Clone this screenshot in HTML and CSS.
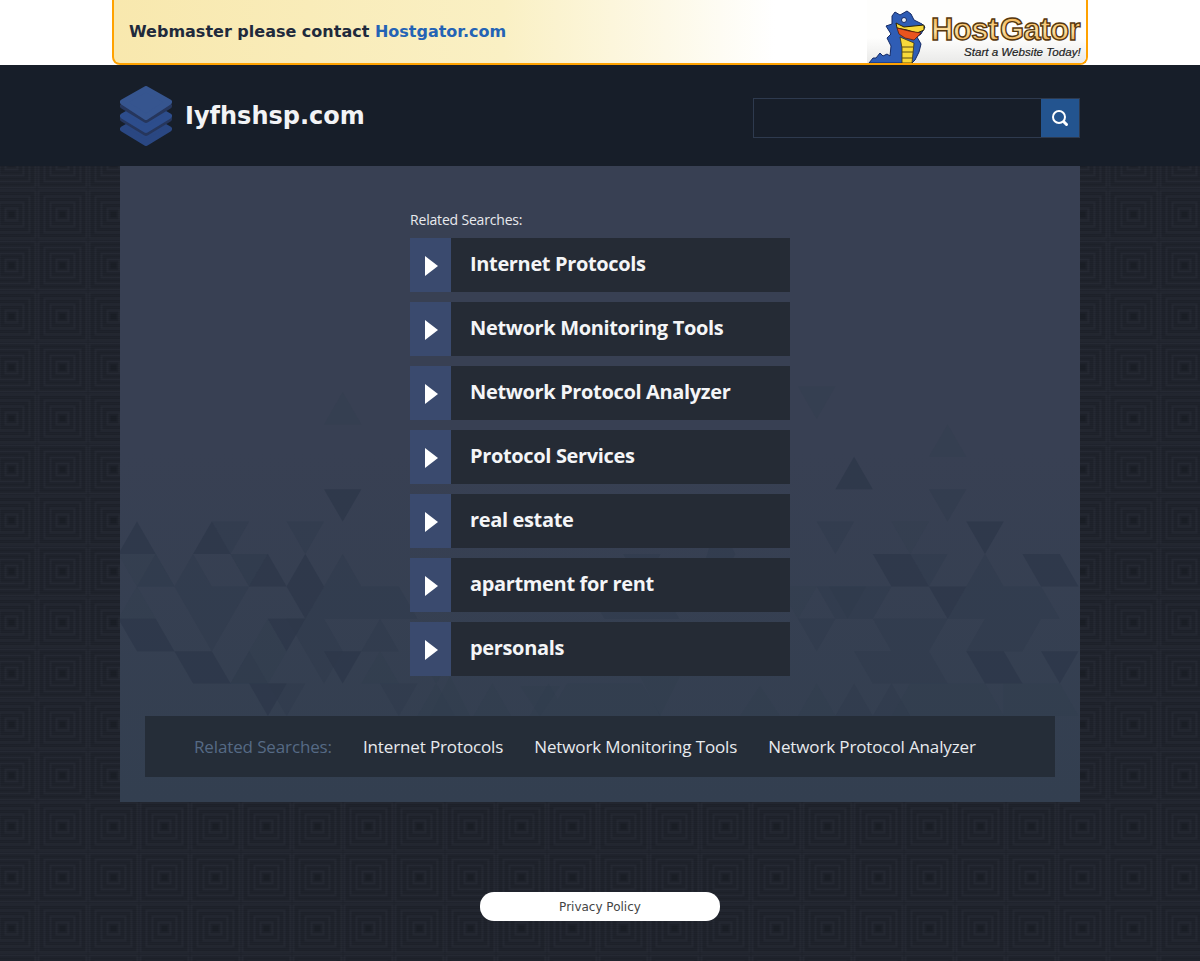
FILE: index.html
```html
<!DOCTYPE html>
<html lang="en">
<head>
    <meta charset="UTF-8" />
    <title>Iyfhshsp.com</title>
    <link rel="stylesheet" href="styles.css">
</head>
<body>
    <div class="topbar">
        <div class="notice">
            <p class="notice-text">Webmaster please contact <a href="#">Hostgator.com</a></p>
            <svg class="gator" width="219" height="63" viewBox="0 0 219 63">
                <defs>
                    <linearGradient id="gatorBg" x1="0" y1="0" x2="0" y2="1">
                        <stop offset="0.6" stop-color="#fefefd" />
                        <stop offset="1" stop-color="#e9e9e8" />
                    </linearGradient>
                    <linearGradient id="gatorText" x1="0" y1="0" x2="0" y2="1">
                        <stop offset="0" stop-color="#f2a436" />
                        <stop offset="0.55" stop-color="#fde0a0" />
                        <stop offset="1" stop-color="#e8952a" />
                    </linearGradient>
                </defs>
                <rect width="219" height="63" fill="url(#gatorBg)" />
                <path class="gator-body" d="M2 63 6 58 9 58 13 53 16 56 20 54 23 56 24 46 20 38 24 34 19 26 25 24 25 16 28 12 33 15 40 11 44 14 47 20 55 24 58 27 54 34 50 37 54 44 52 52 48 60 45 63Z" />
                <path class="gator-belly" d="M33 37 47 43 45 63 35 63 35 48Z" />
                <path class="gator-scale" d="M35 47H46M35 52H46M35 58H45" />
                <path class="gator-jaw" d="M29 23 37 27 57 25 57 30 50 33 40 30 30 28Z" />
                <path class="gator-mouth" d="M30 28 42 31 54 33 47 40 38 38 32 34Z" />
                <circle class="gator-eye" cx="37" cy="20" r="2.5" />
                <text class="gator-name" x="64" y="40">Host Gator</text>
                <text class="gator-slogan" x="97" y="56">Start a Website Today!</text>
            </svg>
        </div>
    </div>

    <header class="site-header">
        <div class="header-inner">
            <a class="brand" href="#">
                <svg class="brand-icon" width="52" height="60" viewBox="0 0 52 60">
                    <path class="stack-low" d="M3 43 26 30 49 43 26 57Z" />
                    <path class="stack-shadow" d="M3 33 26 20 49 33 26 47Z" />
                    <path class="stack-mid" d="M3 30 26 17 49 30 26 44Z" />
                    <path class="stack-shadow" d="M3 20 26 7 49 20 26 34Z" />
                    <path class="stack-top" d="M3 16 26 3 49 16 26 31Z" />
                </svg>
                <span class="brand-name">Iyfhshsp.com</span>
            </a>
            <form class="search">
                <input class="search-input" type="text" />
                <button class="search-btn" type="button" aria-label="Search">
                    <svg width="18" height="18" viewBox="0 0 18 18">
                        <circle cx="8" cy="8" r="6" fill="none" stroke="#fff" stroke-width="2" />
                        <path d="M13 13 15.5 15.5" stroke="#fff" stroke-width="3" stroke-linecap="round" />
                    </svg>
                </button>
            </form>
        </div>
    </header>

    <main class="content">
        <svg class="triangles" width="960" height="636" viewBox="0 0 960 636" aria-hidden="true">
            <g transform="translate(17 355.6) scale(18.7 32.4)">
                <path class="tri-faint" d="M11-4l1 1h-2zM0 2l1 1h-2zM5 1l2 0-1 1zM-1 1h2l1 1h-2zM6 4l1 1h-2zM7 3l1 1-1 1-1-1zM13 4l1 1h-2zM15 4h2l-1 1zM19 5l1 1h-2zM23 5h4l1 1h-6zM21 6l1-1 1 1zM16 5l1 1h-2z" />
                <path class="tri-mid" d="M4 0h2l-1 1zM8 0h2l-1 1zM1 1l1 1h-2zM3 1l1 1h-2zM5 1h2l-1 1zM11 1l1 1h-2zM14 2l1 1h-2zM2 2h4l-1 1h-2zM10 2h4l1 1h-6zM3 3h2l-1 1zM8 3h2l1 1-1 1-1-1zM13 3l1 1h-2zM6 4l1 1h-2zM7 5h2l-1 1zM13 5h2l-1 1zM26 1h2l-1 1zM31 0l1 1-1 1h-1zM24 2h4l1 1h-4zM37 2h2l-1 1z" />
                <path class="tri-dark" d="M10-1h2l-1 1zM0 0l1 1h-2zM4 0l1 1h-2zM7 1l1 1h-2zM9 1l1 1h-2zM-1 3h2l1 1h-2zM7 3h2l-1 1zM2 4h2l1 1h-2zM10 4h2l-1 1zM6 5h2l-1 1zM8 2h2l-1 1-1-1z" />
            </g>
            <g transform="translate(696.7 355.6) scale(18.7 32.4)">
                <path class="tri-faint" d="M-1-4.17h2l-1 1zM7-3l1 1h-2zM4 0h2l-1 1zM-2 2h2l-1 1zM0 5l1 1h-2zM5 5h4l1 1h-6zM10 5h3l1 1h-4z" />
                <path class="tri-mid" d="M6-1h2l-1 1zM0 0h2l-1 1zM5 1h2l-1 1zM9 1l1 1h-2zM0 2h4l-1 1h-2zM8 2h4l1 1h-6zM-1 3h2l-1 1zM3 3h4l-1 1h-2zM2 4h4l1 1h-4zM9 3h3l-1 1h-3zM2 5l1 1h-2zM4 5l1 1h-2z" />
                <path class="tri-dark" d="M2-2l1 1h-2zM8 0h2l-1 1zM3 1h2l1 1h-2zM11 1h2l1 1h-2zM6 2h2l-1 1zM8 4h2l1 1h-2zM12 4h2l-1 1z" />
            </g>
            <path class="tri-mid" d="M430 356 436 366H424ZM550 354 558 366H542Z" />
            <path class="tri-faint" d="M400 520H440L420 550ZM520 510H560L540 550ZM330 510 350 550H310ZM640 520 660 550H620Z" />
        </svg>

        <section class="related">
            <h2 class="related-title">Related Searches:</h2>
            <ul class="result-list">
                <li><a class="result" href="#"><span class="result-arrow"></span><span class="result-name">Internet Protocols</span></a></li>
                <li><a class="result" href="#"><span class="result-arrow"></span><span class="result-name">Network Monitoring Tools</span></a></li>
                <li><a class="result" href="#"><span class="result-arrow"></span><span class="result-name">Network Protocol Analyzer</span></a></li>
                <li><a class="result" href="#"><span class="result-arrow"></span><span class="result-name">Protocol Services</span></a></li>
                <li><a class="result" href="#"><span class="result-arrow"></span><span class="result-name">real estate</span></a></li>
                <li><a class="result" href="#"><span class="result-arrow"></span><span class="result-name">apartment for rent</span></a></li>
                <li><a class="result" href="#"><span class="result-arrow"></span><span class="result-name">personals</span></a></li>
            </ul>
        </section>

        <nav class="bottom-links">
            <span class="bottom-label">Related Searches:</span>
            <a href="#">Internet Protocols</a>
            <a href="#">Network Monitoring Tools</a>
            <a href="#">Network Protocol Analyzer</a>
        </nav>
    </main>

    <footer class="page-footer">
        <a class="privacy" href="#">Privacy Policy</a>
    </footer>
</body>
</html>
```

FILE: styles.css
```css
* {
    box-sizing: border-box;
}

body {
    margin: 0;
    font-family: "DejaVu Sans", sans-serif;
    background-color: #1f232c;
    background-image:
        repeating-linear-gradient(0deg, rgba(0, 0, 0, 0.08) 0 1px, transparent 1px 2px),
        url("data:image/svg+xml,%3Csvg xmlns='http://www.w3.org/2000/svg' width='51' height='51' fill='none' stroke='%23252933' stroke-width='2'%3E%3Crect x='22.5' y='22.5' width='6' height='6' fill='%231b1f27' stroke='none'/%3E%3Crect x='19.5' y='19.5' width='12' height='12'/%3E%3Crect x='13.5' y='13.5' width='24' height='24'/%3E%3Crect x='7.5' y='7.5' width='36' height='36'/%3E%3Crect x='1.5' y='1.5' width='48' height='48'/%3E%3C/svg%3E");
    background-position: 0 0, -14.5px -15px;
}

a {
    text-decoration: none;
    color: inherit;
}

/* top notice */
.topbar {
    background: #fff;
    height: 65px;
}

.notice {
    width: 976px;
    height: 65px;
    margin: 0 auto;
    padding-left: 15px;
    display: flex;
    align-items: center;
    justify-content: space-between;
    background: linear-gradient(90deg, #f8e8ae 0%, #faf0c4 40%, #fff 68%);
    border: 2px solid #ffa200;
    border-top: 0;
    border-radius: 0 0 8px 8px;
    overflow: hidden;
}

.notice-text {
    margin: 0;
    font-size: 16px;
    font-weight: bold;
    color: #1f2a3c;
}

.notice-text a {
    color: #2463b5;
}

.gator {
    display: block;
    align-self: flex-end;
}

.gator-body {
    fill: #2f5db5;
    stroke: #142a66;
    stroke-width: 1;
}

.gator-belly {
    fill: #f8d93a;
    stroke: #3a3210;
    stroke-width: 0.8;
}

.gator-scale {
    fill: none;
    stroke: #5c4c10;
    stroke-width: 1;
}

.gator-jaw {
    fill: #f8d93a;
    stroke: #2a2408;
    stroke-width: 1;
}

.gator-mouth {
    fill: #e9541f;
    stroke: #5a1c08;
    stroke-width: 0.8;
}

.gator-eye {
    fill: #e8edf5;
    stroke: #142a66;
}

.gator-name {
    font-family: "Liberation Sans", sans-serif;
    font-size: 31px;
    font-weight: bold;
    letter-spacing: -0.5px;
    word-spacing: -6px;
    fill: url(#gatorText);
    stroke: #57370d;
    stroke-width: 1.4;
}

.gator-slogan {
    font-family: "Liberation Sans", sans-serif;
    font-size: 11.6px;
    font-style: italic;
    fill: #222;
    stroke: #222;
    stroke-width: 0.2;
}

/* header */
.site-header {
    background: #171e29;
    height: 101px;
}

.header-inner {
    width: 960px;
    height: 100%;
    margin: 0 auto;
    display: flex;
    align-items: center;
    justify-content: space-between;
}

.brand {
    display: flex;
    align-items: center;
    gap: 13px;
}

.brand-icon {
    display: block;
}

.stack-top,
.stack-mid,
.stack-low,
.stack-shadow {
    stroke-width: 6;
    stroke-linejoin: round;
}

.stack-top {
    fill: #36558f;
    stroke: #36558f;
}

.stack-mid {
    fill: #2d4d8c;
    stroke: #2d4d8c;
}

.stack-low {
    fill: #2a4782;
    stroke: #2a4782;
}

.stack-shadow {
    fill: #26365c;
    stroke: #26365c;
}

.brand-name {
    font-size: 24px;
    font-weight: bold;
    color: #f2f3f5;
}

.search {
    display: flex;
    width: 327px;
    height: 40px;
    margin-top: 4px;
    border: 1px solid #2e3a4e;
}

.search-input {
    flex: 1;
    min-width: 0;
    border: 0;
    background: transparent;
}

.search-btn {
    width: 38px;
    padding: 0;
    border: 0;
    background: #23548f;
    display: flex;
    align-items: center;
    justify-content: center;
}

/* main panel */
.content {
    position: relative;
    width: 960px;
    height: 636px;
    margin: 0 auto;
    padding: 44px 25px 0;
    background: linear-gradient(180deg, #384053 0%, #384053 45%, #333f50 100%);
}

.triangles {
    position: absolute;
    top: 0;
    left: 0;
}

.tri-faint {
    fill: #2e3a4b;
    opacity: 0.2;
}

.tri-mid {
    fill: #2e3a4b;
    opacity: 0.45;
}

.tri-dark {
    fill: #2c3648;
    opacity: 0.7;
}

.related {
    position: relative;
    width: 380px;
    margin: 0 auto;
}

.related-title {
    margin: 0 0 9px;
    font-family: "Open Sans", sans-serif;
    font-size: 14px;
    line-height: 19px;
    font-weight: normal;
    letter-spacing: -0.18px;
    color: #e8eaee;
}

.result-list {
    list-style: none;
    margin: 0;
    padding: 0;
    display: flex;
    flex-direction: column;
    gap: 10px;
}

.result {
    display: flex;
    height: 54px;
    background: #252b35;
}

.result-arrow {
    width: 41px;
    padding-top: 2px;
    display: flex;
    align-items: center;
    justify-content: center;
    background: #3a4a6e;
}

.result-arrow::before {
    content: "";
    margin-left: 1px;
    border-left: 13px solid #fff;
    border-top: 10px solid transparent;
    border-bottom: 10px solid transparent;
}

.result-name {
    padding-left: 19px;
    font-family: "Open Sans", sans-serif;
    font-size: 20px;
    line-height: 52px;
    font-weight: bold;
    letter-spacing: -0.35px;
    color: #f4f5f7;
}

.bottom-links {
    position: relative;
    height: 61px;
    margin-top: 40px;
    padding-left: 49px;
    display: flex;
    align-items: center;
    gap: 31px;
    background: #252d38;
    font-family: "Open Sans", sans-serif;
    font-size: 17px;
    letter-spacing: -0.13px;
    color: #e8eaee;
}

.bottom-label {
    color: #566a85;
}

/* footer */
.page-footer {
    padding: 90px 0 40px;
    display: flex;
    justify-content: center;
}

.privacy {
    width: 240px;
    height: 29px;
    display: block;
    border-radius: 14px;
    background: #fff;
    color: #444;
    font-size: 12px;
    line-height: 31px;
    text-align: center;
}
```
